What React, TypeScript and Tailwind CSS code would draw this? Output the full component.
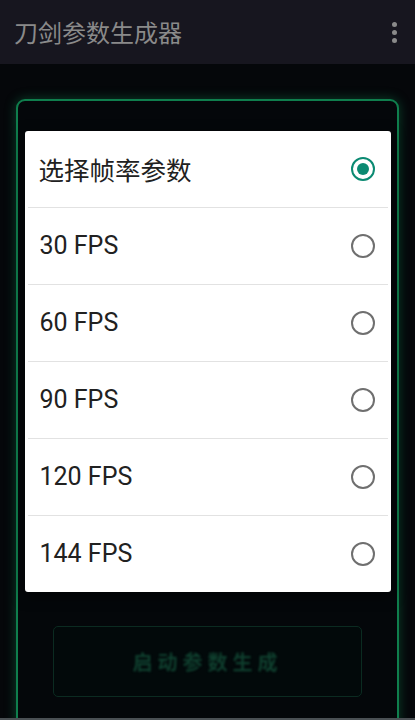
import React from "react";

const options = ["30 FPS", "60 FPS", "90 FPS", "120 FPS", "144 FPS"];

function Radio({ checked }: { checked: boolean }) {
  return checked ? (
    <div className="w-[24px] h-[24px] rounded-full border-[2.5px] border-[#0b8a72] flex items-center justify-center">
      <div className="w-[12px] h-[12px] rounded-full bg-[#0b8a72]" />
    </div>
  ) : (
    <div className="w-[24px] h-[24px] rounded-full border-[2.5px] border-[#6f6f6f]" />
  );
}

export default function App() {
  return (
    <div
      className="relative w-[415px] h-[720px] overflow-hidden bg-[#05070a] flex flex-col"
      style={{ fontFamily: 'Roboto, "Noto Sans CJK SC", sans-serif' }}
    >
      <header className="h-[64px] shrink-0 bg-[#17161f] flex items-center justify-between pl-[14px] pr-[18px]">
        <span
          className="text-[24px] text-[#8a8a8a] leading-none"
          style={{ fontFamily: '"Noto Sans CJK SC", sans-serif' }}
        >
          刀剑参数生成器
        </span>
        <div className="flex flex-col gap-[3px]">
          <div className="w-[5px] h-[5px] rounded-full bg-[#8a8a8a]" />
          <div className="w-[5px] h-[5px] rounded-full bg-[#8a8a8a]" />
          <div className="w-[5px] h-[5px] rounded-full bg-[#8a8a8a]" />
        </div>
      </header>

      <main className="flex-1 overflow-hidden px-[16px] pt-[35px]">
        <div className="h-[700px] border-2 border-[#0f7e4d] rounded-[9px] bg-[#04070a] shadow-[0_0_12px_rgba(20,170,100,0.35)] flex flex-col px-[35px] pt-[525px]">
          <div className="h-[71px] border border-[#0b2b21] rounded-[5px] bg-[#02090a] flex items-center justify-center">
            <span
              className="text-[20px] font-bold tracking-[5px] text-[#0f3f2e] blur-[0.8px]"
              style={{ fontFamily: '"Noto Sans CJK SC", sans-serif' }}
            >
              启动参数生成
            </span>
          </div>
        </div>
      </main>
      <div className="h-[2px] shrink-0 bg-[#4a5054]" />

      <div className="absolute inset-0 flex items-center justify-center pt-[3px]">
        <div className="w-[366px] bg-white rounded-[3px] shadow-[0_4px_14px_rgba(0,0,0,0.6)] flex flex-col">
          <div className="h-[76px] flex items-center justify-between pl-[14px] pr-[16px]">
            <span
              className="text-[25.5px] text-[#212121]"
              style={{ fontFamily: '"Noto Sans CJK SC", sans-serif' }}
            >
              选择帧率参数
            </span>
            <Radio checked={true} />
          </div>
          {options.map((o) => (
            <React.Fragment key={o}>
              <div className="mx-[3px] h-px bg-[#e2e2e2]" />
              <div className="h-[76px] flex items-center justify-between pl-[15px] pr-[16px]">
                <span className="text-[25px] text-[#212121]" style={{ fontFamily: "Roboto, sans-serif" }}>
                  {o}
                </span>
                <Radio checked={false} />
              </div>
            </React.Fragment>
          ))}
        </div>
      </div>
    </div>
  );
}
